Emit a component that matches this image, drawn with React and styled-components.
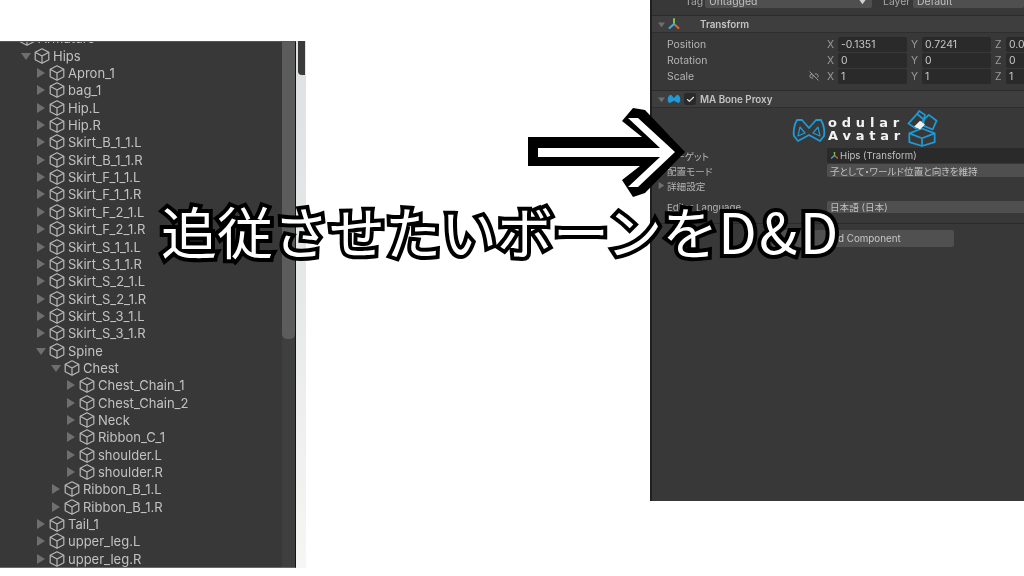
import React from "react";
import styled, { createGlobalStyle } from "styled-components";
import { Check, Link2Off } from "lucide-react";

const Global = createGlobalStyle`
  html, body { margin: 0; padding: 0; background: #fff; }
  body { font-family: "Inter", "Noto Sans CJK JP", sans-serif; overflow: hidden; }
`;

const Page = styled.div`
  position: relative;
  width: 1024px;
  height: 576px;
  overflow: hidden;
  display: flex;
  justify-content: space-between;
  align-items: flex-start;
  background: #fff;
`;

/* hierarchy side */
const HierarchyShot = styled.div`
  display: flex;
  margin-top: 41px;
  height: 527px;
  filter: blur(0.45px);
`;

const Hierarchy = styled.div`
  width: 296px;
  height: 100%;
  display: flex;
  background: #383838;
  border-right: 1px solid #161616;
  border-top: 1px solid #555;
  border-bottom: 1px solid #6a6a6a;
  box-sizing: border-box;
  overflow: hidden;
`;

const Tree = styled.div`
  flex: 1;
  margin-top: -12.3px;
`;

const Row = styled.div`
  height: 17.35px;
  display: flex;
  align-items: center;
  padding-left: ${(p) => p.$depth * 15 + 6}px;
  color: #c2c2c2;
  font-size: 13px;
  white-space: nowrap;
`;

const Fold = styled.svg`
  width: 10px;
  height: 10px;
  margin-right: 3px;
  fill: #6f6f6f;
  flex: none;
`;

const Cube = styled.svg`
  width: 16px;
  height: 16px;
  flex: none;
  margin-right: 3px;
  fill: none;
  stroke: #b9b9b9;
  stroke-width: 1.2;
  stroke-linejoin: round;
`;

const Track = styled.div`
  width: 13px;
  background: #3f3f3f;
`;

const Thumb = styled.div`
  height: 297px;
  background: #5c5c5c;
  border-radius: 0 0 5px 5px;
`;

const Strip = styled.div`
  width: 10px;
  height: 100%;
  background: linear-gradient(#dde1e1, #e6e8e8 45%, #f6f6f4);
`;

const StripThumb = styled.div`
  width: 7px;
  height: 34px;
  margin-left: 2px;
  background: #3a3a3a;
  border-radius: 0 0 0 4px;
`;

/* inspector side */
const Inspector = styled.div`
  width: 374px;
  height: 501px;
  box-sizing: border-box;
  background: #383838;
  border-left: 2px solid #202020;
  overflow: hidden;
  display: flex;
  flex-direction: column;
  color: #b4b4b4;
  font-size: 10.4px;
  font-feature-settings: "palt";
  filter: blur(0.4px);
`;

const TagRow = styled.div`
  height: 14px;
  margin-top: -6px;
  display: flex;
  align-items: center;
  padding-left: 33px;
  white-space: nowrap;
`;

const TagLabel = styled.span`
  width: ${(p) => p.$w}px;
  flex: none;
  color: #a8a8a8;
`;

const Dropdown = styled.div`
  flex: ${(p) => (p.$grow ? 1 : "none")};
  width: ${(p) => p.$w || 0}px;
  height: 14px;
  margin-right: ${(p) => p.$mr || 0}px;
  padding: 0 4px;
  box-sizing: border-box;
  display: flex;
  align-items: center;
  justify-content: space-between;
  background: #4f4f4f;
  border-radius: 2px;
  color: #c0c0c0;
`;

const Header = styled.div`
  height: 18px;
  margin-top: ${(p) => p.$mt}px;
  display: flex;
  align-items: center;
  padding-left: 6px;
  box-sizing: border-box;
  background: #3e3e3e;
  border-top: 1px solid #2b2b2b;
  border-bottom: 1px solid #2e2e2e;
  color: #c4c4c4;
  font-size: 9.8px;
  font-weight: 600;
`;

const HeaderIcon = styled.svg`
  width: ${(p) => p.$size || 14}px;
  height: ${(p) => p.$size || 14}px;
  flex: none;
  margin-right: ${(p) => (p.$size ? 1 : 0)}px;
`;

const HeaderTitle = styled.span`
  margin-left: ${(p) => p.$ml}px;
`;

const CheckBox = styled.span`
  width: 12px;
  height: 12px;
  margin-left: 3px;
  border-radius: 2px;
  background: #2a2a2a;
  color: #e4e4e4;
  display: flex;
  align-items: center;
  justify-content: center;
`;

const TransformGrid = styled.div`
  margin-top: 3px;
  margin-bottom: 6px;
`;

const FieldRow = styled.div`
  height: 16px;
  display: flex;
  align-items: center;
  padding-left: 15px;
  white-space: nowrap;
`;

const FieldLabel = styled.div`
  width: 160px;
  flex: none;
  display: flex;
  align-items: center;
  justify-content: space-between;
  padding-right: 8px;
  box-sizing: border-box;
`;

const Axis = styled.span`
  width: 11px;
  flex: none;
  color: #9a9a9a;
`;

const NumBox = styled.span`
  width: 69px;
  height: 15px;
  flex: none;
  margin-right: 4px;
  padding-left: 3px;
  box-sizing: border-box;
  background: #2a2a2a;
  border-radius: 2px;
  color: #c8c8c8;
  line-height: 15px;
`;

const Logo = styled.div`
  height: 40px;
  display: flex;
  align-items: center;
  padding-left: 140px;
  color: #1f9ad6;
`;

const LogoText = styled.div`
  margin: 2px 0 0 2px;
  width: 78px;
  font-family: "DejaVu Sans", sans-serif;
  font-weight: 700;
  font-size: 13px;
  line-height: 13px;
  letter-spacing: 4.8px;
  color: #f2f2f2;
`;

const PropRow = styled.div`
  height: 15px;
  margin-top: ${(p) => p.$mt || 0}px;
  display: flex;
  align-items: center;
  padding-left: 15px;
  white-space: nowrap;
  font-size: 9.6px;
`;

const PropLabel = styled.span`
  width: 160px;
  flex: none;
`;

const PropField = styled.div`
  flex: 1;
  height: ${(p) => (p.$dark ? 15 : 12.5)}px;
  padding-left: 3px;
  display: flex;
  align-items: center;
  background: ${(p) => (p.$dark ? "#2a2a2a" : "#4f4f4f")};
  border-radius: 2px 0 0 2px;
  color: #c0c0c0;
`;

const Foldout = styled.div`
  height: 15.5px;
  display: flex;
  align-items: center;
  padding-left: 6px;
  font-size: 9.6px;
`;

const SmallFold = styled.svg`
  width: 7px;
  height: 7px;
  margin-right: 2px;
  fill: #6f6f6f;
`;

const Divider = styled.div`
  height: 1px;
  margin-top: 8px;
  background: #2a2a2a;
`;

const AddButton = styled.div`
  width: 182px;
  height: 17.5px;
  margin: 6px 0 0 120px;
  display: flex;
  align-items: center;
  justify-content: center;
  background: #505050;
  border-radius: 2px;
  color: #c8c8c8;
  font-size: 9.8px;
`;

/* overlays */
const Arrow = styled.svg`
  position: absolute;
  left: 518px;
  top: 98px;
  width: 176px;
  height: 110px;
`;

const Caption = styled.div`
  position: absolute;
  left: 161px;
  top: 190px;
  font-family: "Noto Sans CJK JP", sans-serif;
  font-weight: 400;
  font-size: 56px;
  line-height: 80px;
  white-space: nowrap;
  color: #fff;
  -webkit-text-stroke: 8px #000;
  paint-order: stroke fill;
  stroke-linejoin: round;
`;

const CaptionLatin = styled.span`
  letter-spacing: 2.5px;
`;

const skirts = ["B_1", "F_1", "F_2", "S_1", "S_2", "S_3"].flatMap((s) => [
  `Skirt_${s}_1.L`,
  `Skirt_${s}_1.R`,
]);

const rows = [
  ["Armature", 0, true],
  ["Hips", 1, true],
  ...["Apron_1", "bag_1", "Hip.L", "Hip.R", ...skirts].map((n) => [n, 2]),
  ["Spine", 2, true],
  ["Chest", 3, true],
  ...["Chest_Chain_1", "Chest_Chain_2", "Neck", "Ribbon_C_1", "shoulder.L", "shoulder.R"].map((n) => [n, 4]),
  ["Ribbon_B_1.L", 3],
  ["Ribbon_B_1.R", 3],
  ["Tail_1", 2],
  ["upper_leg.L", 2],
  ["upper_leg.R", 2],
];

const transform = [
  ["Position", ["-0.1351", "0.7241", "0.04"]],
  ["Rotation", ["0", "0", "0"]],
  ["Scale", ["1", "1", "1"], true],
];

const CubeIcon = () => (
  <Cube viewBox="0 0 16 16">
    <path d="M8 .8 14.8 4.2V11.8L8 15.2 1.2 11.8V4.2Z" />
    <path d="M1.2 4.2 8 8 14.8 4.2M8 8V15.2" />
  </Cube>
);

const AxisIcon = ({ size }) => (
  <HeaderIcon $size={size} viewBox="0 0 14 14" fill="none" strokeWidth="2" strokeLinecap="round">
    <path d="M7 7V2" stroke="#7fbf4a" />
    <path d="M7 7 11.5 11" stroke="#e0603a" />
    <path d="M7 7 2.5 11" stroke="#4aa8dc" />
  </HeaderIcon>
);

const Bowtie = () => (
  <svg width="34" height="25" viewBox="0 0 34 25" fill="none" stroke="#1f9ad6" strokeWidth="1.8" strokeLinejoin="round" style={{ flex: "none", marginTop: 5 }}>
    <path d="M17 10 10 2 5 2C2 7 1 14 2 18L6 23 17 17 28 23 32 18C33 14 32 7 29 2L24 2Z" />
    <path d="M6 18 8 9 13 15ZM28 18 26 9 21 15Z" strokeWidth="1.2" />
  </svg>
);

const BoxLogo = () => (
  <svg width="32" height="37" viewBox="0 0 32 38" fill="none" stroke="#1f9ad6" strokeWidth="1.8" strokeLinejoin="round" style={{ flex: "none" }}>
    <path d="M16 19 29 24V33L16 37 3 33V24Z" />
    <path d="M3 24 16 29 29 24M16 29V37" />
    <path d="M2 14 11 4 18 10 10 19Z" />
    <path d="M11 4 13 1 19 5 18 10" />
    <path d="M18 10 23 5 31 11 27 20 17 16Z" />
    <path d="M8 17 14 11 19 15 14 20Z" fill="#f2f2f2" stroke="none" />
  </svg>
);

export default function App() {
  return (
    <Page>
      <Global />
      <HierarchyShot>
        <Hierarchy>
          <Tree>
            {rows.map(([name, depth, open]) => (
              <Row key={name} $depth={depth}>
                <Fold viewBox="0 0 10 10">
                  {open ? <path d="M0 2H10L5 9Z" /> : <path d="M1 0 9 5 1 10Z" />}
                </Fold>
                <CubeIcon />
                {name}
              </Row>
            ))}
          </Tree>
          <Track>
            <Thumb />
          </Track>
        </Hierarchy>
        <Strip>
          <StripThumb />
        </Strip>
      </HierarchyShot>

      <Inspector>
        <TagRow>
          <TagLabel $w={20}>Tag</TagLabel>
          <Dropdown $w={167} $mr={11}>
            Untagged
            <SmallFold viewBox="0 0 10 10">
              <path d="M0 2H10L5 9Z" fill="#d0d0d0" />
            </SmallFold>
          </Dropdown>
          <TagLabel $w={30}>Layer</TagLabel>
          <Dropdown $grow>Default</Dropdown>
        </TagRow>

        <Header $mt={7}>
          <SmallFold viewBox="0 0 10 10">
            <path d="M0 2H10L5 9Z" />
          </SmallFold>
          <AxisIcon />
          <HeaderTitle $ml={19}>Transform</HeaderTitle>
        </Header>
        <TransformGrid>
          {transform.map(([label, values, link]) => (
            <FieldRow key={label}>
              <FieldLabel>
                {label}
                {link && <Link2Off size={10} color="#a8a8a8" />}
              </FieldLabel>
              {values.map((v, i) => (
                <React.Fragment key={i}>
                  <Axis>{"XYZ"[i]}</Axis>
                  <NumBox>{v}</NumBox>
                </React.Fragment>
              ))}
            </FieldRow>
          ))}
        </TransformGrid>

        <Header $mt={0}>
          <SmallFold viewBox="0 0 10 10">
            <path d="M0 2H10L5 9Z" />
          </SmallFold>
          <HeaderIcon viewBox="0 0 34 25">
            <path d="M17 10 10 2 5 4C2 8 1 14 2 18L6 23 17 17 28 23 32 18C33 14 32 8 29 4L24 2Z" fill="#1f9ad6" />
          </HeaderIcon>
          <CheckBox>
            <Check size={9} strokeWidth={3} />
          </CheckBox>
          <HeaderTitle $ml={4}>MA Bone Proxy</HeaderTitle>
        </Header>

        <Logo>
          <Bowtie />
          <LogoText>
            odular
            <br />
            Avatar
          </LogoText>
          <BoxLogo />
        </Logo>

        <PropRow>
          <PropLabel>ターゲット</PropLabel>
          <PropField $dark>
            <AxisIcon size={9} />
            Hips (Transform)
          </PropField>
        </PropRow>
        <PropRow>
          <PropLabel>配置モード</PropLabel>
          <PropField>子として・ワールド位置と向きを維持</PropField>
        </PropRow>
        <Foldout>
          <SmallFold viewBox="0 0 10 10">
            <path d="M1 0 9 5 1 10Z" />
          </SmallFold>
          詳細設定
        </Foldout>
        <PropRow $mt={6}>
          <PropLabel>Editor Language</PropLabel>
          <PropField>日本語 (日本)</PropField>
        </PropRow>
        <Divider />
        <AddButton>Add Component</AddButton>
      </Inspector>

      <Arrow viewBox="518 98 176 110">
        <polygon points="528,137 642,137 622,121 633,108 645,110 685,152 645,193 633,197 622,180 640,166 528,166" fill="#000" />
        <polygon points="538,148 660,148 628,118 638,118 675,152 638,187 628,187 660,157 538,157" fill="#fff" />
      </Arrow>
      <Caption>
        追従させたいボーンを<CaptionLatin>D&amp;D</CaptionLatin>
      </Caption>
    </Page>
  );
}
